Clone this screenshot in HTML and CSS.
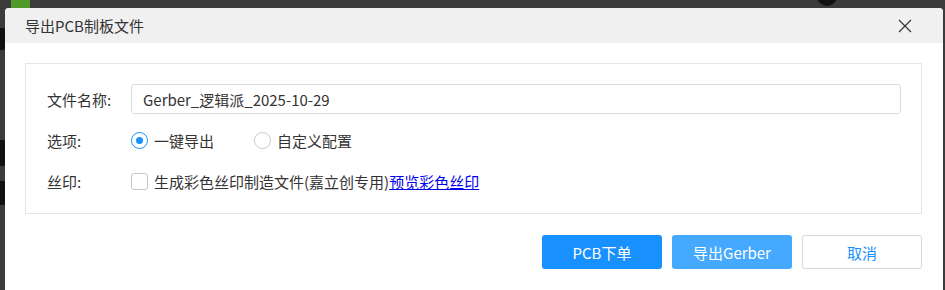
FILE: index.html
```html
<!DOCTYPE html>
<html lang="zh-CN">

<head>
    <meta charset="UTF-8">
    <title>导出PCB制板文件</title>
    <link rel="stylesheet" href="styles.css">
</head>

<body>
    <div class="desk-green"></div>
    <div class="desk-dot"></div>
    <div class="desk-blob blob1"></div>
    <div class="desk-blob blob2"></div>
    <div class="desk-blob blob3"></div>

    <div class="dialog">
        <div class="dialog-head">
            <span class="dialog-title">导出PCB制板文件</span>
            <svg class="close" width="14" height="14" viewBox="0 0 14 14">
                <path d="M1 1 L13 13 M13 1 L1 13" stroke="#333" stroke-width="1.2" fill="none" />
            </svg>
        </div>
        <div class="dialog-body">
            <div class="box">
                <div class="row">
                    <label class="lbl">文件名称:</label>
                    <input class="txt" type="text" value="Gerber_逻辑派_2025-10-29">
                </div>
                <div class="row">
                    <label class="lbl">选项:</label>
                    <span class="radio on"></span><span class="opt">一键导出</span>
                    <span class="radio"></span><span class="opt">自定义配置</span>
                </div>
                <div class="row">
                    <label class="lbl">丝印:</label>
                    <span class="check"></span><span class="opt">生成彩色丝印制造文件(嘉立创专用)<a href="#">预览彩色丝印</a></span>
                </div>
            </div>
            <div class="btns">
                <button class="btn primary">PCB下单</button>
                <button class="btn light">导出Gerber</button>
                <button class="btn plain">取消</button>
            </div>
        </div>
    </div>
</body>

</html>
```

FILE: styles.css
```css
* {
    margin: 0;
    padding: 0;
    box-sizing: border-box;
}

body {
    background: #3b3b3b;
    font-family: "Microsoft YaHei", "Noto Sans CJK SC", sans-serif;
    font-size: 15px;
    color: #333;
    overflow: hidden;
    height: 290px;
    position: relative;
}

/* desktop bits behind the dialog */
.desk-green {
    position: absolute;
    left: 11px;
    top: 0;
    width: 19px;
    height: 10px;
    background: #4f9a2a;
}

.desk-dot {
    position: absolute;
    left: 817px;
    top: -14px;
    width: 20px;
    height: 20px;
    border-radius: 50%;
    background: #111;
}

.desk-blob {
    position: absolute;
    left: -10px;
    width: 20px;
    border-radius: 8px;
    background: #111;
}

.blob1 {
    top: 28px;
    height: 22px;
}

.blob2 {
    top: 140px;
    height: 26px;
}

.blob3 {
    top: 181px;
    height: 24px;
}

.dialog {
    position: relative;
    margin: 8px 2px 0 5px;
    width: 938px;
    height: 282px;
    background: #fff;
    border-radius: 4px 4px 0 0;
    overflow: hidden;
}

.dialog-head {
    height: 35px;
    background: #f0f0f0;
    display: flex;
    align-items: center;
    justify-content: space-between;
    padding: 0 31px 0 20px;
}

.dialog-title {
    font-size: 15px;
    color: #333;
}

.dialog-body {
    padding: 20px 21px 0 20px;
}

.box {
    border: 1px solid #e6e6e6;
    height: 151px;
    padding: 20px 20px 0 21px;
}

.row {
    display: flex;
    align-items: center;
    height: 30px;
    margin-bottom: 11px;
}

.row:nth-child(2) {
    margin-top: 4px;
}

.lbl {
    width: 84px;
    flex-shrink: 0;
    color: #333;
}

.txt {
    flex: 1;
    height: 30px;
    border: 1px solid #dcdcdc;
    border-radius: 3px;
    padding: 0 11px;
    font-family: "Microsoft YaHei", "Noto Sans CJK SC", sans-serif;
    font-size: 15px;
    color: #333;
    outline: none;
}

.radio {
    width: 17px;
    height: 17px;
    border: 1px solid #c8c8c8;
    border-radius: 50%;
    margin-right: 6px;
    display: flex;
    align-items: center;
    justify-content: center;
}

.radio.on {
    border-color: #1890ff;
}

.radio.on::after {
    content: "";
    width: 7px;
    height: 7px;
    border-radius: 50%;
    background: #1890ff;
}

.opt {
    margin-right: 40px;
}

.opt a {
    color: #0000ee;
}

.check {
    width: 17px;
    height: 17px;
    border: 1px solid #c8c8c8;
    border-radius: 3px;
    margin-right: 6px;
}

.btns {
    display: flex;
    justify-content: flex-end;
    gap: 10px;
    margin-top: 21px;
}

.btn {
    width: 120px;
    height: 34px;
    border-radius: 3px;
    font-family: "Microsoft YaHei", "Noto Sans CJK SC", sans-serif;
    font-size: 15px;
    border: 1px solid transparent;
}

.primary {
    background: #1890ff;
    color: #fff;
}

.light {
    background: #45a9ff;
    color: #fff;
}

.plain {
    background: #fff;
    border-color: #d9d9d9;
    color: #1890ff;
}
```
